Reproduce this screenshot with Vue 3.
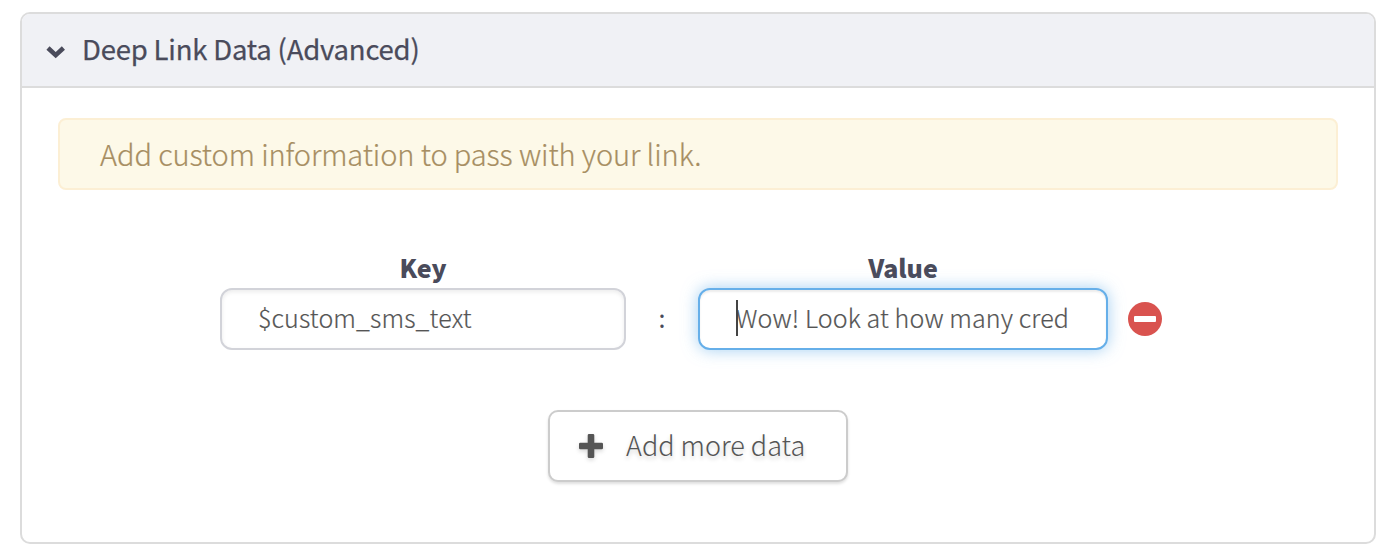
<script setup>
import { ref } from 'vue'

const open = ref(true)
const dataKey = ref('$custom_sms_text')
const dataValue = ref('Wow! Look at how many cred')
</script>

<template>
  <section class="panel">
    <header class="panel-head" @click="open = !open">
      <svg class="chevron" width="20" height="14" viewBox="0 0 20 14">
        <path d="M2 3L9.700 10.200L17.400 3" fill="none" stroke="#4a4b5b" stroke-width="4.600" />
      </svg>
      <h1 class="title">Deep Link Data (Advanced)</h1>
    </header>
    <div v-if="open" class="panel-body">
      <div class="alert">Add custom information to pass with your link.</div>
      <div class="fields">
        <div class="field key">
          <label class="label" for="key">Key</label>
          <input id="key" v-model="dataKey" class="input" type="text" />
        </div>
        <span class="colon">:</span>
        <div class="field value">
          <label class="label" for="value">Value</label>
          <div class="wrap">
            <input id="value" v-model="dataValue" class="input active" type="text" />
            <i class="caret"></i>
          </div>
        </div>
        <svg class="remove" width="34" height="34" viewBox="0 0 34 34">
          <circle cx="17" cy="17" r="17" fill="#d9534f" />
          <rect x="6" y="14" width="22" height="6" rx="1" fill="#fff" />
        </svg>
      </div>
      <button class="add" type="button">
        <svg class="plus" width="24" height="24" viewBox="0 0 24 24">
          <path d="M10 0h4a1.300 1.300 0 0 1 1.300 1.300V8.700h7.400A1.300 1.300 0 0 1 24 10v4a1.300 1.300 0 0 1-1.300 1.300H15.300v7.400A1.300 1.300 0 0 1 14 24h-4a1.300 1.300 0 0 1-1.300-1.300V15.300H1.300A1.300 1.300 0 0 1 0 14v-4A1.300 1.300 0 0 1 1.300 8.700H8.700V1.300A1.300 1.300 0 0 1 10 0z" fill="#555" />
        </svg>
        <span class="add-text">Add more data</span>
      </button>
    </div>
  </section>
</template>

<style>
body {
  background: #fff;
}
</style>

<style scoped>
.panel,
.input,
.add {
  font-family: "Source Sans Pro", "Noto Sans CJK SC", sans-serif;
  box-sizing: border-box;
}
.panel {
  width: 1356px;
  height: 532px;
  margin: 12px 0 0 20px;
  border: 2px solid #dcdcdc;
  border-radius: 10px;
  overflow: hidden;
  color: #4a4b5b;
}
.panel-head {
  display: flex;
  align-items: center;
  box-sizing: border-box;
  height: 74px;
  padding-left: 24px;
  background: #f0f1f5;
  border-bottom: 2px solid #dcdcdc;
}
.chevron {
  margin-top: 3px;
}
.title {
  margin: 0 0 0 16px;
  padding-bottom: 4px;
  font-size: 27.500px;
  font-weight: 400;
  line-height: 40px;
  letter-spacing: -0.200px;
  white-space: nowrap;
  -webkit-text-stroke: 0.250px #4a4b5b;
}
.panel-body {
  display: flex;
  flex-direction: column;
  align-items: center;
  padding: 30px 36px 0;
}
.alert {
  box-sizing: border-box;
  width: 1280px;
  height: 72px;
  padding-left: 40px;
  border: 2px solid #fcefd4;
  border-radius: 8px;
  background: #fdf9e8;
  color: #a78e62;
  font-size: 29px;
  font-weight: 300;
  line-height: 66px;
  letter-spacing: -0.100px;
  -webkit-text-stroke: 0.200px #a78e62;
}
.fields {
  display: flex;
  align-items: flex-end;
  align-self: flex-start;
  margin: 60px 0 0 162px;
}
.field {
  display: flex;
  flex-direction: column;
}
.key {
  width: 406px;
}
.value {
  width: 410px;
}
.label {
  height: 38px;
  line-height: 34px;
  text-align: center;
  font-size: 25px;
  font-weight: 900;
}
.input {
  display: block;
  width: 100%;
  height: 62px;
  margin: 0;
  padding: 0 36px 4px;
  border: 2px solid #d2d3d9;
  border-radius: 12px;
  outline: none;
  background: #fff;
  box-shadow: inset 0 2px 4px rgba(0, 0, 0, 0.08);
  color: #555;
  font-size: 25px;
  font-weight: 300;
  letter-spacing: 0.120px;
  -webkit-text-stroke: 0.200px #555;
}
.input.active {
  border-color: #66afe9;
  box-shadow: inset 0 2px 2px rgba(0, 0, 0, 0.075), 0 0 16px rgba(102, 175, 233, 0.6);
}
.wrap {
  position: relative;
}
.caret {
  position: absolute;
  left: 38px;
  top: 12px;
  width: 2px;
  height: 36px;
  background: #444;
}
.colon {
  width: 72px;
  height: 62px;
  line-height: 58px;
  text-align: center;
  font-size: 25px;
  font-weight: 400;
}
.remove {
  margin: 0 0 14px 20px;
}
.add {
  display: flex;
  align-items: center;
  width: 300px;
  height: 72px;
  margin: 60px 0 0;
  padding: 0 0 0 29px;
  border: 2px solid #ccc;
  border-radius: 10px;
  background: #fff;
  box-shadow: 0 2px 3px rgba(0, 0, 0, 0.13);
  color: #555;
  font-size: 27px;
  font-weight: 300;
  text-shadow: 0 3px 4px rgba(0, 0, 0, 0.18);
}
.plus {
  overflow: visible;
  filter: drop-shadow(0 2px 2px rgba(0, 0, 0, 0.16));
}
.add-text {
  margin: 0 0 4px 23px;
  white-space: nowrap;
}
</style>
